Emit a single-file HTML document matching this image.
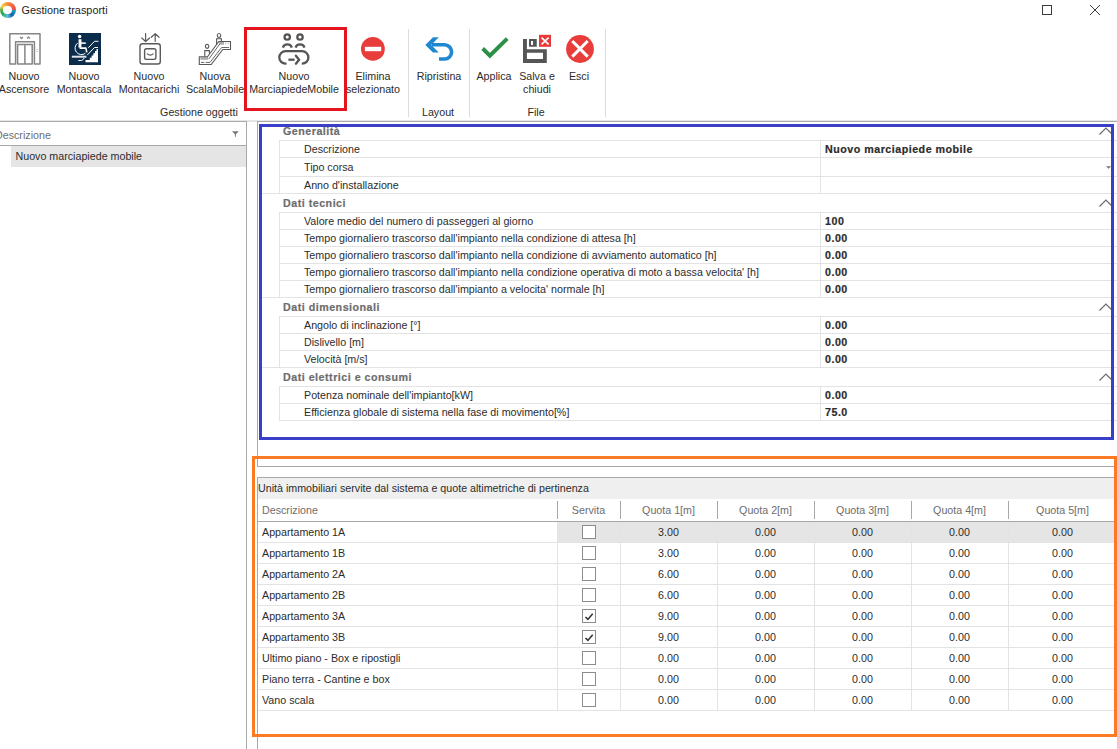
<!DOCTYPE html>
<html><head><meta charset="utf-8">
<style>
*{margin:0;padding:0;box-sizing:border-box}
html,body{width:1117px;height:749px;overflow:hidden;background:#fff}
body{position:relative;font-family:"Liberation Sans",sans-serif;font-size:10.7px;color:#2c2c2c}
.a{position:absolute}
.t{position:absolute;white-space:nowrap;line-height:13px;height:13px}
.c{text-align:center}
.b{font-weight:bold;letter-spacing:0.5px;-webkit-text-stroke:0.2px currentColor}
.g{color:#6d6d6d}
.hl{position:absolute;height:1px}
.vl{position:absolute;width:1px}
</style></head><body>

<!-- Title bar -->
<div class="a" style="left:0;top:2px;width:16px;height:16px;border-radius:50%;background:conic-gradient(from -30deg,#f6b23a 0deg,#ef7d3c 45deg,#f2534a 100deg,#e94a4a 118deg,#17a6c6 122deg,#1d5fa8 175deg,#56c3d8 215deg,#25a85c 265deg,#58b04a 300deg,#f8d53a 330deg,#f6b23a 360deg);filter:blur(0.2px)"></div>
<div class="a" style="left:3.4px;top:5.6px;width:8.8px;height:8.8px;border-radius:50%;background:#fff;filter:blur(0.4px)"></div>
<div class="t" style="left:21.5px;top:4.3px;font-size:10.8px;color:#1a1a1a;letter-spacing:0.05px">Gestione trasporti</div>
<div class="a" style="left:1042px;top:5px;width:10px;height:10px;border:1px solid #3a3a3a"></div>
<svg class="a" style="left:1089px;top:4px" width="12" height="12" viewBox="0 0 12 12"><path d="M1 1L11 11M11 1L1 11" stroke="#3a3a3a" stroke-width="1"/></svg>

<!-- Ribbon icons -->
<svg class="a" style="left:0;top:25px" width="620" height="45" viewBox="0 25 620 45">
  <!-- Ascensore -->
  <g fill="none" stroke="#858585" stroke-width="1.5" stroke-linejoin="round">
    <path d="M15.6 64 H9.8 V33.8 H40 V64 H34.4 V41.8 H15.6 Z"/>
    <path d="M17.6 64 V44.4 H32.2 V64 Z"/>
    <path d="M24.9 44.4 V64"/>
    <path d="M20 37 L21.5 38.5 L23 37 M27 38.5 L28.5 37 L30 38.5" stroke-width="1.2"/>
  </g>
  <rect x="36.6" y="48.9" width="1" height="1" fill="#999"/><rect x="36.6" y="51" width="1" height="1" fill="#999"/>
  <!-- Montascala -->
  <rect x="69" y="33" width="32" height="32" fill="#0b2c4a"/>
  <g fill="none" stroke="#fff">
    <circle cx="79.6" cy="36.4" r="1.75" fill="#fff" stroke="none"/>
    <path d="M80 39.2 V47.6" stroke-width="2.9"/>
    <path d="M79.6 48.1 H85.9 L86.8 52.3" stroke-width="1.6" stroke-linejoin="round"/>
    <path d="M81 43 L85.8 43.3" stroke-width="1.5"/>
    <path d="M77.6 43.1 A6.3 6.3 0 1 0 85.3 53.3" stroke-width="1"/>
    <path d="M71.8 56.7 H86.4" stroke-width="2" stroke="#dde3e8"/>
    <path d="M78.3 60.5 L81.5 60.5 Q83.3 60 84.2 58" stroke-width="1"/>
    <path d="M88.3 47.8 L94.5 41.3 L98.5 41.3" stroke-width="1"/>
    <path d="M87.3 55 L94.5 47.5 L98 47.5" stroke-width="1"/>
  </g>
  <path d="M85.5 62.2 H98 V49 H96.5 V51 H95 V53.3 H93.3 V55.5 H91.6 V57.8 H89.8 V60 H85.5 Z" fill="#fff"/>
  <!-- Montacarichi -->
  <g fill="none" stroke="#5a5a5a" stroke-width="1.4" stroke-linecap="round" stroke-linejoin="round">
    <rect x="140" y="43.7" width="20.3" height="20.3" rx="2.6"/>
    <rect x="144.6" y="48.7" width="11.3" height="10.7" rx="1.8"/>
    <path d="M147.2 53.9 Q150.2 56.3 153.2 53.9" stroke-width="1.2"/>
    <path d="M145.6 33.5 V41.3 M141.8 38 L145.6 41.5 L149.6 38" stroke-width="1.2"/>
    <path d="M155.2 41.3 V33.7 M151.3 37.3 L155.2 33.6 L159 37.3" stroke-width="1.2"/>
  </g>
  <!-- ScalaMobile -->
  <rect x="200.5" y="57.2" width="7.6" height="2.6" fill="#ababab"/>
  <rect x="219.2" y="42" width="4.8" height="2.7" fill="#ababab"/>
  <rect x="225.2" y="42.2" width="1" height="2.2" fill="#c4c4c4"/><rect x="227.6" y="42.2" width="1" height="2.2" fill="#c4c4c4"/>
  <g fill="none" stroke="#585858" stroke-width="1.1" stroke-linejoin="miter">
    <path d="M199.3 56.8 H207.5 L218.8 41.5 H230.5 V49.5 H222.8 L211.2 64.5 H199.3 Z"/>
    <path d="M208.9 58.9 L220 43.7" stroke-width="0.9"/>
    <path d="M201 62.4 H204.3 M205.6 62.4 H210 L221.6 47.5 H229" stroke-width="0.9"/>
    <ellipse cx="207.1" cy="46.35" rx="1.75" ry="2"/>
    <path d="M204.8 56.6 V50.6 H209.4 V53.6"/>
    <ellipse cx="219" cy="35.5" rx="1.75" ry="2"/>
    <path d="M216.6 45 V38.7 H221.4 V41.2"/>
  </g>
  <!-- MarciapiedeMobile -->
  <g fill="none" stroke="#555" stroke-width="2.3">
    <circle cx="287.25" cy="37" r="2.7"/>
    <circle cx="300" cy="37" r="2.7"/>
    <path d="M282.9 47.6 A4.6 4.3 0 0 1 291.8 47.6"/>
    <path d="M295.6 47.6 A4.6 4.3 0 0 1 304.5 47.6"/>
    <path d="M286.5 63.7 H285.55 A6.25 6.25 0 0 1 285.55 51.2 H302.15 A6.25 6.25 0 0 1 302.15 63.7 H301.8"/>
    <path d="M288.4 59.7 H294.6"/>
    <path d="M295.9 55.7 L299.1 59.7 L295.9 63.7" stroke-linecap="round"/>
  </g>
  <!-- Elimina -->
  <circle cx="372.9" cy="48.9" r="11.9" fill="#e83d3b"/>
  <rect x="364.9" y="46.8" width="16.3" height="4.4" fill="#fff"/>
  <!-- Ripristina -->
  <path d="M425.3 44.9 L433 37.2 L438.8 37.2 L431.2 44.9 L438.8 52.6 L433 52.6 Z" fill="#1f88d0"/>
  <path d="M432 44.8 H444.5 A7.1 7.1 0 0 1 444.5 59 H439" fill="none" stroke="#1f88d0" stroke-width="3.6"/>
  <!-- Applica -->
  <path d="M482.7 48.5 L489.9 55.7 L507.2 38.6" fill="none" stroke="#2b8f47" stroke-width="3.9"/>
  <!-- Salva e chiudi -->
  <path d="M523 38.9 H526.9 V49.2 H546.8 V62.9 H523 Z M526.9 52.8 V59.1 H543 V52.8 Z" fill="#555" fill-rule="evenodd"/>
  <path d="M529 39.1 H536.75 V46.8 H529 Z M531 41 V44.9 H533 V41 Z" fill="#555" fill-rule="evenodd"/>
  <rect x="539" y="34.8" width="12" height="12" fill="#e8393b"/>
  <path d="M541.6 37.6 L548.6 44.4 M548.6 37.6 L541.6 44.4" stroke="#fff" stroke-width="1.6"/>
  <!-- Esci -->
  <circle cx="580" cy="49" r="13.9" fill="#e83d3b"/>
  <path d="M573.3 42 L586.7 55.6 M586.7 42 L573.3 55.6" stroke="#fff" stroke-width="3" stroke-linecap="square"/>
</svg>

<!-- Ribbon labels -->
<div class="t c" style="left:-6px;width:60px;top:70px">Nuovo</div>
<div class="t c" style="left:-6px;width:60px;top:83px">Ascensore</div>
<div class="t c" style="left:54px;width:60px;top:70px">Nuovo</div>
<div class="t c" style="left:54px;width:60px;top:83px">Montascala</div>
<div class="t c" style="left:114px;width:70px;top:70px">Nuovo</div>
<div class="t c" style="left:114px;width:70px;top:83px">Montacarichi</div>
<div class="t c" style="left:180px;width:70px;top:70px">Nuova</div>
<div class="t c" style="left:180px;width:70px;top:83px">ScalaMobile</div>
<div class="t c" style="left:244px;width:100px;top:70px">Nuovo</div>
<div class="t c" style="left:244px;width:100px;top:83px">MarciapiedeMobile</div>
<div class="t c" style="left:343px;width:60px;top:70px">Elimina</div>
<div class="t c" style="left:343px;width:60px;top:83px">selezionato</div>
<div class="t c" style="left:409px;width:60px;top:70px">Ripristina</div>
<div class="t c" style="left:469px;width:50px;top:70px">Applica</div>
<div class="t c" style="left:512px;width:50px;top:70px">Salva e</div>
<div class="t c" style="left:512px;width:50px;top:83px">chiudi</div>
<div class="t c" style="left:554px;width:50px;top:70px">Esci</div>
<div class="t c" style="left:149px;width:100px;top:106px">Gestione oggetti</div>
<div class="t c" style="left:408px;width:60px;top:106px">Layout</div>
<div class="t c" style="left:506px;width:60px;top:106px">File</div>
<div class="vl" style="left:408px;top:29px;height:88px;background:#dcdcdc"></div>
<div class="vl" style="left:469px;top:29px;height:88px;background:#dcdcdc"></div>
<div class="vl" style="left:605px;top:29px;height:88px;background:#dcdcdc"></div>
<!-- red highlight -->
<div class="a" style="left:244px;top:27px;width:103px;height:84px;border:3px solid #e4141e"></div>
<!-- ribbon bottom -->
<div class="hl" style="left:0;top:120px;width:1117px;background:#e6e6e6"></div>
<div class="hl" style="left:0;top:121px;width:247px;background:#ababab"></div>
<div class="hl" style="left:247px;top:121px;width:10px;background:#e2e2e2"></div>
<div class="hl" style="left:257px;top:121px;width:860px;background:#ababab"></div>

<!-- Left panel -->
<div class="vl" style="left:246px;top:121px;height:628px;background:#a8a8a8"></div>
<div class="hl" style="left:0;top:145px;width:246px;background:#a8a8a8"></div>
<div class="t g" style="left:-5px;top:128.5px">Descrizione</div>
<svg class="a" style="left:230px;top:129px" width="10" height="10" viewBox="230 129 10 10"><path d="M232 131.2 H238.8 L235.9 134.2 V136.8 H234.9 V134.2 Z" fill="#777"/></svg>
<div class="a" style="left:11px;top:146px;width:235px;height:21px;background:#e5e5e5"></div>
<div class="t" style="left:15.5px;top:150px">Nuovo marciapiede mobile</div>

<!-- Right property panel box -->
<div class="vl" style="left:257px;top:121px;height:346px;background:#a8a8a8"></div>
<div class="hl" style="left:257px;top:466px;width:860px;background:#a8a8a8"></div>

<div class="t b g" style="left:283px;top:124.5px">Generalità</div>
<svg class="a" style="left:1096px;top:121px" width="20" height="19" viewBox="1096 121 20 19"><path d="M1099.5 134.5 L1105.9 128 L1112.4 134.5" fill="none" stroke="#6d6d6d" stroke-width="1.2"/></svg>
<div class="hl" style="left:279px;top:140px;width:838px;background:#e3e3e3"></div>
<div class="vl" style="left:279px;top:140px;height:17px;background:#e3e3e3"></div>
<div class="vl" style="left:820px;top:140px;height:17px;background:#e3e3e3"></div>
<div class="t" style="left:304px;top:142.5px">Descrizione</div>
<div class="t b" style="left:825px;top:142.5px">Nuovo marciapiede mobile</div>
<div class="hl" style="left:279px;top:157px;width:838px;background:#e3e3e3"></div>
<div class="vl" style="left:279px;top:157px;height:19px;background:#e3e3e3"></div>
<div class="vl" style="left:820px;top:157px;height:19px;background:#e3e3e3"></div>
<div class="t" style="left:304px;top:160.5px">Tipo corsa</div>
<svg class="a" style="left:1104px;top:157px" width="10" height="19" viewBox="1104 157 10 19"><path d="M1106 166.2 H1111.2 L1108.6 168.8 Z" fill="#777"/></svg>
<div class="hl" style="left:279px;top:176px;width:838px;background:#e3e3e3"></div>
<div class="vl" style="left:279px;top:176px;height:17px;background:#e3e3e3"></div>
<div class="vl" style="left:820px;top:176px;height:17px;background:#e3e3e3"></div>
<div class="t" style="left:304px;top:178.5px">Anno d'installazione</div>
<div class="hl" style="left:262px;top:193px;width:855px;background:#e3e3e3"></div>
<div class="t b g" style="left:283px;top:196.5px">Dati tecnici</div>
<svg class="a" style="left:1096px;top:193px" width="20" height="19" viewBox="1096 193 20 19"><path d="M1099.5 206.5 L1105.9 200 L1112.4 206.5" fill="none" stroke="#6d6d6d" stroke-width="1.2"/></svg>
<div class="hl" style="left:279px;top:212px;width:838px;background:#e3e3e3"></div>
<div class="vl" style="left:279px;top:212px;height:17px;background:#e3e3e3"></div>
<div class="vl" style="left:820px;top:212px;height:17px;background:#e3e3e3"></div>
<div class="t" style="left:304px;top:214.5px">Valore medio del numero di passeggeri al giorno</div>
<div class="t b" style="left:825px;top:214.5px">100</div>
<div class="hl" style="left:279px;top:229px;width:838px;background:#e3e3e3"></div>
<div class="vl" style="left:279px;top:229px;height:17px;background:#e3e3e3"></div>
<div class="vl" style="left:820px;top:229px;height:17px;background:#e3e3e3"></div>
<div class="t" style="left:304px;top:231.5px">Tempo giornaliero trascorso dall'impianto nella condizione di attesa [h]</div>
<div class="t b" style="left:825px;top:231.5px">0.00</div>
<div class="hl" style="left:279px;top:246px;width:838px;background:#e3e3e3"></div>
<div class="vl" style="left:279px;top:246px;height:17px;background:#e3e3e3"></div>
<div class="vl" style="left:820px;top:246px;height:17px;background:#e3e3e3"></div>
<div class="t" style="left:304px;top:248.5px">Tempo giornaliero trascorso dall'impianto nella condizione di avviamento automatico [h]</div>
<div class="t b" style="left:825px;top:248.5px">0.00</div>
<div class="hl" style="left:279px;top:263px;width:838px;background:#e3e3e3"></div>
<div class="vl" style="left:279px;top:263px;height:17px;background:#e3e3e3"></div>
<div class="vl" style="left:820px;top:263px;height:17px;background:#e3e3e3"></div>
<div class="t" style="left:304px;top:265.5px">Tempo giornaliero trascorso dall'impianto nella condizione operativa di moto a bassa velocita' [h]</div>
<div class="t b" style="left:825px;top:265.5px">0.00</div>
<div class="hl" style="left:279px;top:280px;width:838px;background:#e3e3e3"></div>
<div class="vl" style="left:279px;top:280px;height:17px;background:#e3e3e3"></div>
<div class="vl" style="left:820px;top:280px;height:17px;background:#e3e3e3"></div>
<div class="t" style="left:304px;top:282.5px">Tempo giornaliero trascorso dall'impianto a velocita' normale [h]</div>
<div class="t b" style="left:825px;top:282.5px">0.00</div>
<div class="hl" style="left:262px;top:297px;width:855px;background:#e3e3e3"></div>
<div class="t b g" style="left:283px;top:300.5px">Dati dimensionali</div>
<svg class="a" style="left:1096px;top:297px" width="20" height="19" viewBox="1096 297 20 19"><path d="M1099.5 310.5 L1105.9 304 L1112.4 310.5" fill="none" stroke="#6d6d6d" stroke-width="1.2"/></svg>
<div class="hl" style="left:279px;top:316px;width:838px;background:#e3e3e3"></div>
<div class="vl" style="left:279px;top:316px;height:17px;background:#e3e3e3"></div>
<div class="vl" style="left:820px;top:316px;height:17px;background:#e3e3e3"></div>
<div class="t" style="left:304px;top:318.5px">Angolo di inclinazione [°]</div>
<div class="t b" style="left:825px;top:318.5px">0.00</div>
<div class="hl" style="left:279px;top:333px;width:838px;background:#e3e3e3"></div>
<div class="vl" style="left:279px;top:333px;height:17px;background:#e3e3e3"></div>
<div class="vl" style="left:820px;top:333px;height:17px;background:#e3e3e3"></div>
<div class="t" style="left:304px;top:335.5px">Dislivello [m]</div>
<div class="t b" style="left:825px;top:335.5px">0.00</div>
<div class="hl" style="left:279px;top:350px;width:838px;background:#e3e3e3"></div>
<div class="vl" style="left:279px;top:350px;height:17px;background:#e3e3e3"></div>
<div class="vl" style="left:820px;top:350px;height:17px;background:#e3e3e3"></div>
<div class="t" style="left:304px;top:352.5px">Velocità [m/s]</div>
<div class="t b" style="left:825px;top:352.5px">0.00</div>
<div class="hl" style="left:262px;top:367px;width:855px;background:#e3e3e3"></div>
<div class="t b g" style="left:283px;top:370.5px">Dati elettrici e consumi</div>
<svg class="a" style="left:1096px;top:367px" width="20" height="19" viewBox="1096 367 20 19"><path d="M1099.5 380.5 L1105.9 374 L1112.4 380.5" fill="none" stroke="#6d6d6d" stroke-width="1.2"/></svg>
<div class="hl" style="left:279px;top:386px;width:838px;background:#e3e3e3"></div>
<div class="vl" style="left:279px;top:386px;height:17px;background:#e3e3e3"></div>
<div class="vl" style="left:820px;top:386px;height:17px;background:#e3e3e3"></div>
<div class="t" style="left:304px;top:388.5px">Potenza nominale dell'impianto[kW]</div>
<div class="t b" style="left:825px;top:388.5px">0.00</div>
<div class="hl" style="left:279px;top:403px;width:838px;background:#e3e3e3"></div>
<div class="vl" style="left:279px;top:403px;height:17px;background:#e3e3e3"></div>
<div class="vl" style="left:820px;top:403px;height:17px;background:#e3e3e3"></div>
<div class="t" style="left:304px;top:405.5px">Efficienza globale di sistema nella fase di movimento[%]</div>
<div class="t b" style="left:825px;top:405.5px">75.0</div>
<div class="hl" style="left:279px;top:420px;width:838px;background:#e3e3e3"></div>

<!-- lower grid -->
<div class="hl" style="left:257px;top:477px;width:860px;background:#a8a8a8"></div>
<div class="vl" style="left:257px;top:477px;height:272px;background:#a8a8a8"></div>
<div class="a" style="left:258px;top:478px;width:859px;height:21px;background:#efefef"></div>
<div class="t" style="left:258px;top:481.5px">Unità immobiliari servite dal sistema e quote altimetriche di pertinenza</div>
<div class="t g" style="left:262px;top:503.79999999999995px">Descrizione</div>
<div class="t g c" style="left:557px;width:63px;top:503.79999999999995px">Servita</div>
<div class="t g c" style="left:620px;width:97px;top:503.79999999999995px">Quota 1[m]</div>
<div class="t g c" style="left:717px;width:97px;top:503.79999999999995px">Quota 2[m]</div>
<div class="t g c" style="left:814px;width:97px;top:503.79999999999995px">Quota 3[m]</div>
<div class="t g c" style="left:911px;width:97px;top:503.79999999999995px">Quota 4[m]</div>
<div class="t g c" style="left:1008px;width:109px;top:503.79999999999995px">Quota 5[m]</div>
<div class="vl" style="left:557px;top:501px;height:18px;background:#a8a8a8"></div>
<div class="vl" style="left:620px;top:501px;height:18px;background:#a8a8a8"></div>
<div class="vl" style="left:717px;top:501px;height:18px;background:#a8a8a8"></div>
<div class="vl" style="left:814px;top:501px;height:18px;background:#a8a8a8"></div>
<div class="vl" style="left:911px;top:501px;height:18px;background:#a8a8a8"></div>
<div class="vl" style="left:1008px;top:501px;height:18px;background:#a8a8a8"></div>
<div class="hl" style="left:258px;top:521px;width:859px;background:#a8a8a8"></div>
<div class="a" style="left:557px;top:522px;width:557px;height:20px;background:#e5e5e5"></div>
<div class="hl" style="left:258px;top:542px;width:856px;background:#e3e3e3"></div>
<div class="vl" style="left:557px;top:522px;height:20px;background:#e3e3e3"></div>
<div class="vl" style="left:620px;top:522px;height:20px;background:#e3e3e3"></div>
<div class="vl" style="left:717px;top:522px;height:20px;background:#e3e3e3"></div>
<div class="vl" style="left:814px;top:522px;height:20px;background:#e3e3e3"></div>
<div class="vl" style="left:911px;top:522px;height:20px;background:#e3e3e3"></div>
<div class="vl" style="left:1008px;top:522px;height:20px;background:#e3e3e3"></div>
<div class="t" style="left:262px;top:525.7px">Appartamento 1A</div>
<div class="a" style="left:582px;top:525px;width:14px;height:14px;border:1px solid #8c8c8c;background:#fff"></div>
<div class="t c" style="left:620px;width:97px;top:525.7px">3.00</div>
<div class="t c" style="left:717px;width:97px;top:525.7px">0.00</div>
<div class="t c" style="left:814px;width:97px;top:525.7px">0.00</div>
<div class="t c" style="left:911px;width:97px;top:525.7px">0.00</div>
<div class="t c" style="left:1008px;width:109px;top:525.7px">0.00</div>
<div class="hl" style="left:258px;top:563px;width:856px;background:#e3e3e3"></div>
<div class="vl" style="left:557px;top:543px;height:20px;background:#e3e3e3"></div>
<div class="vl" style="left:620px;top:543px;height:20px;background:#e3e3e3"></div>
<div class="vl" style="left:717px;top:543px;height:20px;background:#e3e3e3"></div>
<div class="vl" style="left:814px;top:543px;height:20px;background:#e3e3e3"></div>
<div class="vl" style="left:911px;top:543px;height:20px;background:#e3e3e3"></div>
<div class="vl" style="left:1008px;top:543px;height:20px;background:#e3e3e3"></div>
<div class="t" style="left:262px;top:546.7px">Appartamento 1B</div>
<div class="a" style="left:582px;top:546px;width:14px;height:14px;border:1px solid #8c8c8c;background:#fff"></div>
<div class="t c" style="left:620px;width:97px;top:546.7px">3.00</div>
<div class="t c" style="left:717px;width:97px;top:546.7px">0.00</div>
<div class="t c" style="left:814px;width:97px;top:546.7px">0.00</div>
<div class="t c" style="left:911px;width:97px;top:546.7px">0.00</div>
<div class="t c" style="left:1008px;width:109px;top:546.7px">0.00</div>
<div class="hl" style="left:258px;top:584px;width:856px;background:#e3e3e3"></div>
<div class="vl" style="left:557px;top:564px;height:20px;background:#e3e3e3"></div>
<div class="vl" style="left:620px;top:564px;height:20px;background:#e3e3e3"></div>
<div class="vl" style="left:717px;top:564px;height:20px;background:#e3e3e3"></div>
<div class="vl" style="left:814px;top:564px;height:20px;background:#e3e3e3"></div>
<div class="vl" style="left:911px;top:564px;height:20px;background:#e3e3e3"></div>
<div class="vl" style="left:1008px;top:564px;height:20px;background:#e3e3e3"></div>
<div class="t" style="left:262px;top:567.7px">Appartamento 2A</div>
<div class="a" style="left:582px;top:567px;width:14px;height:14px;border:1px solid #8c8c8c;background:#fff"></div>
<div class="t c" style="left:620px;width:97px;top:567.7px">6.00</div>
<div class="t c" style="left:717px;width:97px;top:567.7px">0.00</div>
<div class="t c" style="left:814px;width:97px;top:567.7px">0.00</div>
<div class="t c" style="left:911px;width:97px;top:567.7px">0.00</div>
<div class="t c" style="left:1008px;width:109px;top:567.7px">0.00</div>
<div class="hl" style="left:258px;top:605px;width:856px;background:#e3e3e3"></div>
<div class="vl" style="left:557px;top:585px;height:20px;background:#e3e3e3"></div>
<div class="vl" style="left:620px;top:585px;height:20px;background:#e3e3e3"></div>
<div class="vl" style="left:717px;top:585px;height:20px;background:#e3e3e3"></div>
<div class="vl" style="left:814px;top:585px;height:20px;background:#e3e3e3"></div>
<div class="vl" style="left:911px;top:585px;height:20px;background:#e3e3e3"></div>
<div class="vl" style="left:1008px;top:585px;height:20px;background:#e3e3e3"></div>
<div class="t" style="left:262px;top:588.7px">Appartamento 2B</div>
<div class="a" style="left:582px;top:588px;width:14px;height:14px;border:1px solid #8c8c8c;background:#fff"></div>
<div class="t c" style="left:620px;width:97px;top:588.7px">6.00</div>
<div class="t c" style="left:717px;width:97px;top:588.7px">0.00</div>
<div class="t c" style="left:814px;width:97px;top:588.7px">0.00</div>
<div class="t c" style="left:911px;width:97px;top:588.7px">0.00</div>
<div class="t c" style="left:1008px;width:109px;top:588.7px">0.00</div>
<div class="hl" style="left:258px;top:626px;width:856px;background:#e3e3e3"></div>
<div class="vl" style="left:557px;top:606px;height:20px;background:#e3e3e3"></div>
<div class="vl" style="left:620px;top:606px;height:20px;background:#e3e3e3"></div>
<div class="vl" style="left:717px;top:606px;height:20px;background:#e3e3e3"></div>
<div class="vl" style="left:814px;top:606px;height:20px;background:#e3e3e3"></div>
<div class="vl" style="left:911px;top:606px;height:20px;background:#e3e3e3"></div>
<div class="vl" style="left:1008px;top:606px;height:20px;background:#e3e3e3"></div>
<div class="t" style="left:262px;top:609.7px">Appartamento 3A</div>
<div class="a" style="left:582px;top:609px;width:14px;height:14px;border:1px solid #8c8c8c;background:#fff"></div>
<svg class="a" style="left:582px;top:609px" width="14" height="14" viewBox="0 0 14 14"><path d="M3.5 8 L5.9 10.4 L10.7 4.7" fill="none" stroke="#333" stroke-width="1.6"/></svg>
<div class="t c" style="left:620px;width:97px;top:609.7px">9.00</div>
<div class="t c" style="left:717px;width:97px;top:609.7px">0.00</div>
<div class="t c" style="left:814px;width:97px;top:609.7px">0.00</div>
<div class="t c" style="left:911px;width:97px;top:609.7px">0.00</div>
<div class="t c" style="left:1008px;width:109px;top:609.7px">0.00</div>
<div class="hl" style="left:258px;top:647px;width:856px;background:#e3e3e3"></div>
<div class="vl" style="left:557px;top:627px;height:20px;background:#e3e3e3"></div>
<div class="vl" style="left:620px;top:627px;height:20px;background:#e3e3e3"></div>
<div class="vl" style="left:717px;top:627px;height:20px;background:#e3e3e3"></div>
<div class="vl" style="left:814px;top:627px;height:20px;background:#e3e3e3"></div>
<div class="vl" style="left:911px;top:627px;height:20px;background:#e3e3e3"></div>
<div class="vl" style="left:1008px;top:627px;height:20px;background:#e3e3e3"></div>
<div class="t" style="left:262px;top:630.7px">Appartamento 3B</div>
<div class="a" style="left:582px;top:630px;width:14px;height:14px;border:1px solid #8c8c8c;background:#fff"></div>
<svg class="a" style="left:582px;top:630px" width="14" height="14" viewBox="0 0 14 14"><path d="M3.5 8 L5.9 10.4 L10.7 4.7" fill="none" stroke="#333" stroke-width="1.6"/></svg>
<div class="t c" style="left:620px;width:97px;top:630.7px">9.00</div>
<div class="t c" style="left:717px;width:97px;top:630.7px">0.00</div>
<div class="t c" style="left:814px;width:97px;top:630.7px">0.00</div>
<div class="t c" style="left:911px;width:97px;top:630.7px">0.00</div>
<div class="t c" style="left:1008px;width:109px;top:630.7px">0.00</div>
<div class="hl" style="left:258px;top:668px;width:856px;background:#e3e3e3"></div>
<div class="vl" style="left:557px;top:648px;height:20px;background:#e3e3e3"></div>
<div class="vl" style="left:620px;top:648px;height:20px;background:#e3e3e3"></div>
<div class="vl" style="left:717px;top:648px;height:20px;background:#e3e3e3"></div>
<div class="vl" style="left:814px;top:648px;height:20px;background:#e3e3e3"></div>
<div class="vl" style="left:911px;top:648px;height:20px;background:#e3e3e3"></div>
<div class="vl" style="left:1008px;top:648px;height:20px;background:#e3e3e3"></div>
<div class="t" style="left:262px;top:651.7px">Ultimo piano - Box e ripostigli</div>
<div class="a" style="left:582px;top:651px;width:14px;height:14px;border:1px solid #8c8c8c;background:#fff"></div>
<div class="t c" style="left:620px;width:97px;top:651.7px">0.00</div>
<div class="t c" style="left:717px;width:97px;top:651.7px">0.00</div>
<div class="t c" style="left:814px;width:97px;top:651.7px">0.00</div>
<div class="t c" style="left:911px;width:97px;top:651.7px">0.00</div>
<div class="t c" style="left:1008px;width:109px;top:651.7px">0.00</div>
<div class="hl" style="left:258px;top:689px;width:856px;background:#e3e3e3"></div>
<div class="vl" style="left:557px;top:669px;height:20px;background:#e3e3e3"></div>
<div class="vl" style="left:620px;top:669px;height:20px;background:#e3e3e3"></div>
<div class="vl" style="left:717px;top:669px;height:20px;background:#e3e3e3"></div>
<div class="vl" style="left:814px;top:669px;height:20px;background:#e3e3e3"></div>
<div class="vl" style="left:911px;top:669px;height:20px;background:#e3e3e3"></div>
<div class="vl" style="left:1008px;top:669px;height:20px;background:#e3e3e3"></div>
<div class="t" style="left:262px;top:672.7px">Piano terra - Cantine e box</div>
<div class="a" style="left:582px;top:672px;width:14px;height:14px;border:1px solid #8c8c8c;background:#fff"></div>
<div class="t c" style="left:620px;width:97px;top:672.7px">0.00</div>
<div class="t c" style="left:717px;width:97px;top:672.7px">0.00</div>
<div class="t c" style="left:814px;width:97px;top:672.7px">0.00</div>
<div class="t c" style="left:911px;width:97px;top:672.7px">0.00</div>
<div class="t c" style="left:1008px;width:109px;top:672.7px">0.00</div>
<div class="hl" style="left:258px;top:710px;width:856px;background:#e3e3e3"></div>
<div class="vl" style="left:557px;top:690px;height:20px;background:#e3e3e3"></div>
<div class="vl" style="left:620px;top:690px;height:20px;background:#e3e3e3"></div>
<div class="vl" style="left:717px;top:690px;height:20px;background:#e3e3e3"></div>
<div class="vl" style="left:814px;top:690px;height:20px;background:#e3e3e3"></div>
<div class="vl" style="left:911px;top:690px;height:20px;background:#e3e3e3"></div>
<div class="vl" style="left:1008px;top:690px;height:20px;background:#e3e3e3"></div>
<div class="t" style="left:262px;top:693.7px">Vano scala</div>
<div class="a" style="left:582px;top:693px;width:14px;height:14px;border:1px solid #8c8c8c;background:#fff"></div>
<div class="t c" style="left:620px;width:97px;top:693.7px">0.00</div>
<div class="t c" style="left:717px;width:97px;top:693.7px">0.00</div>
<div class="t c" style="left:814px;width:97px;top:693.7px">0.00</div>
<div class="t c" style="left:911px;width:97px;top:693.7px">0.00</div>
<div class="t c" style="left:1008px;width:109px;top:693.7px">0.00</div>

<!-- highlight boxes -->
<div class="a" style="left:259px;top:124px;width:855px;height:316px;border:3px solid #3a3fc9"></div>
<div class="a" style="left:252px;top:456px;width:865px;height:281px;border:3px solid #fb7a24"></div>
</body></html>
